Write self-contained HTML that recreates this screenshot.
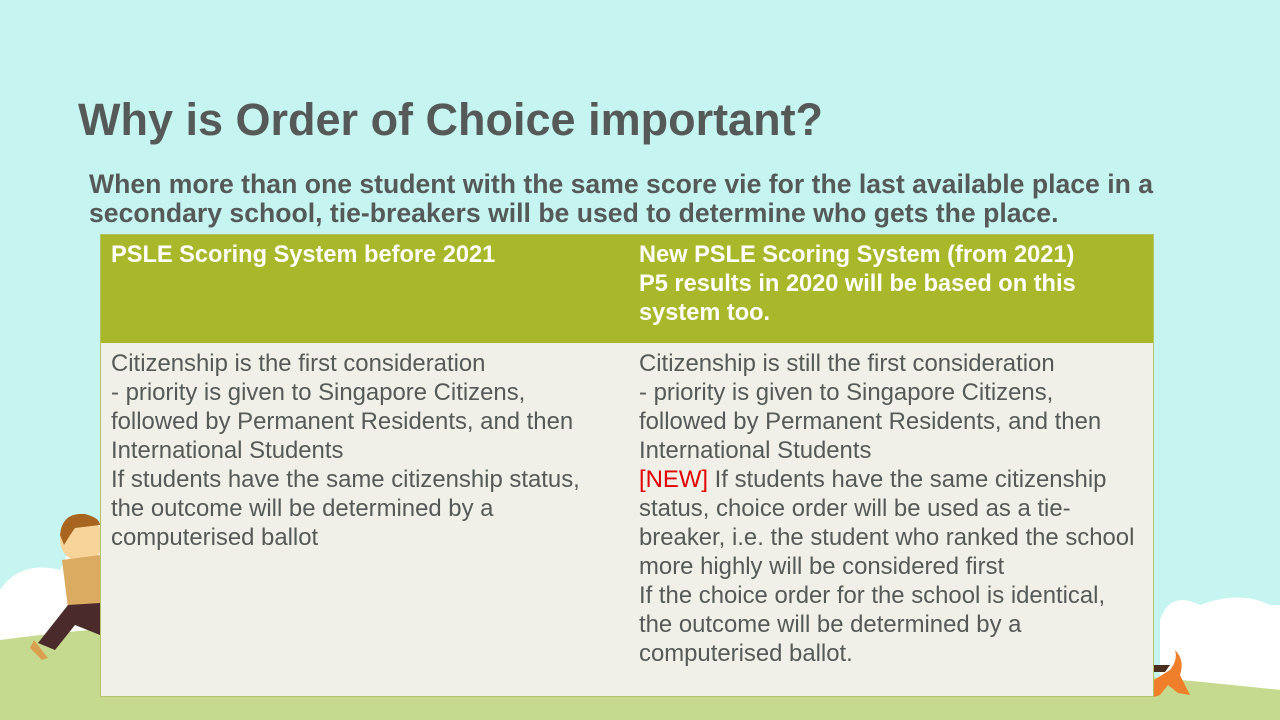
<!DOCTYPE html>
<html><head><style>
body{margin:0;width:1280px;height:720px;overflow:hidden;background:#c6f5f1;font-family:"Liberation Sans",sans-serif;position:relative}
.abs{position:absolute}
h1{position:absolute;left:78px;top:94px;margin:0;font-size:45px;font-weight:bold;color:#555a58;white-space:nowrap}
.sub{left:89px;top:170px;font-size:26.6px;font-weight:bold;color:#555a58;line-height:29px;white-space:nowrap}
.tbl{left:100px;top:234px;width:1054px;height:463px;border:1px solid #b5c26a;box-sizing:border-box}
.hd{position:absolute;top:0;height:108px;left:0;right:0;background:#a8b82a}
.bd{position:absolute;top:108px;bottom:0;left:0;right:0;background:#f0f0e8}
.c{position:absolute;font-size:23.9px;line-height:29px;color:#555a58;white-space:nowrap}
.h{color:#fff;font-weight:bold;font-size:23.6px}
</style></head><body>
<svg class="abs" style="left:0;top:0" width="1280" height="720">
<path d="M0 590 Q20 560 60 570 Q90 500 150 520 Q170 540 170 600 L170 720 L0 720Z" fill="#fff"/>
<path d="M1160 620 Q1170 590 1200 605 Q1240 590 1270 605 L1280 605 L1280 720 L1160 720Z" fill="#fff"/>
<path d="M0 640 Q300 600 640 640 Q1000 660 1280 690 L1280 720 L0 720Z" fill="#c5da8e"/>
<path d="M1154 680 L1170 670 Q1178 660 1175 650 Q1185 660 1180 675 L1190 695 L1178 693 L1168 685 L1160 695 L1154 697Z" fill="#ef7f2a"/>
<path d="M1154 665 L1170 665 L1165 672 L1154 672Z" fill="#4a2e20"/>
<circle cx="82" cy="540" r="22" fill="#f7d49a"/>
<path d="M60 535 Q62 512 85 514 Q100 518 100 525 L75 528 Q70 535 64 545Z" fill="#a8651f"/>
<path d="M62 560 L100 555 L100 605 L68 608Z" fill="#dcab62"/>
<path d="M68 605 L100 603 L100 635 L75 625 L55 650 L38 643 Z" fill="#4a2a2a"/>
<path d="M34 640 L48 658 L42 660 L30 648Z" fill="#d9a050"/>
</svg>
<h1>Why is Order of Choice important?</h1>
<div class="abs sub">When more than one student with the same score vie for the last available place in a<br>secondary school, tie-breakers will be used to determine who gets the place.</div>
<div class="abs tbl">
<div class="hd"></div><div class="bd"></div>
<div class="c h" style="left:10px;top:6px">PSLE Scoring System before 2021</div>
<div class="c h" style="left:538px;top:6px">New PSLE Scoring System (from 2021)<br>P5 results in 2020 will be based on this<br>system too.</div>
<div class="c" style="left:10px;top:114px">Citizenship is the first consideration<br>- priority is given to Singapore Citizens,<br>followed by Permanent Residents, and then<br>International Students<br>If students have the same citizenship status,<br>the outcome will be determined by a<br>computerised ballot</div>
<div class="c" style="left:538px;top:114px">Citizenship is still the first consideration<br>- priority is given to Singapore Citizens,<br>followed by Permanent Residents, and then<br>International Students<br><span style="color:#e00000">[NEW]</span> If students have the same citizenship<br>status, choice order will be used as a tie-<br>breaker, i.e. the student who ranked the school<br>more highly will be considered first<br>If the choice order for the school is identical,<br>the outcome will be determined by a<br>computerised ballot.</div>
</div>
</body></html>
